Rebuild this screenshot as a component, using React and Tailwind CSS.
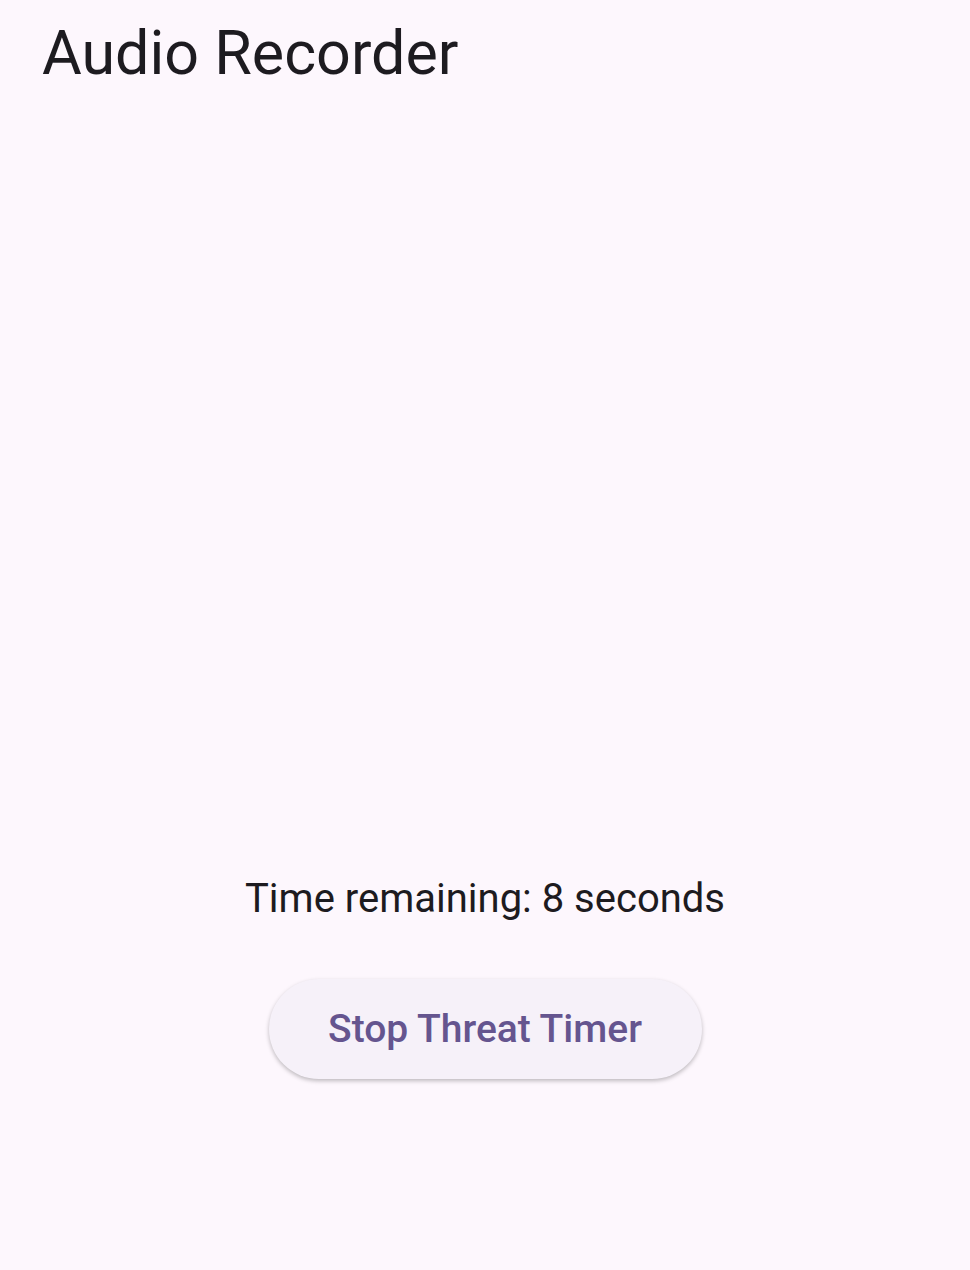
import React from "react";

export default function App() {
  return (
    <div
      className="min-h-[1270px] w-full bg-[#fdf7fd] text-[#1d1b20] flex flex-col"
      style={{ fontFamily: "Roboto, 'Liberation Sans', sans-serif" }}
    >
      <header className="h-[112px] px-[42px] flex items-center">
        <h1 className="text-[61px] leading-none font-normal -mt-[6px]">Audio Recorder</h1>
      </header>
      <main className="flex-1 flex flex-col items-center justify-center pt-[576px]">
        <p className="text-[40px] leading-none">Time remaining: 8 seconds</p>
        <button className="mt-[60px] w-[433px] h-[100px] rounded-full bg-[#f6f1f9] text-[#65558f] text-[39px] font-medium shadow-[0_2px_4px_rgba(0,0,0,0.25)]">
          Stop Threat Timer
        </button>
      </main>
    </div>
  );
}
